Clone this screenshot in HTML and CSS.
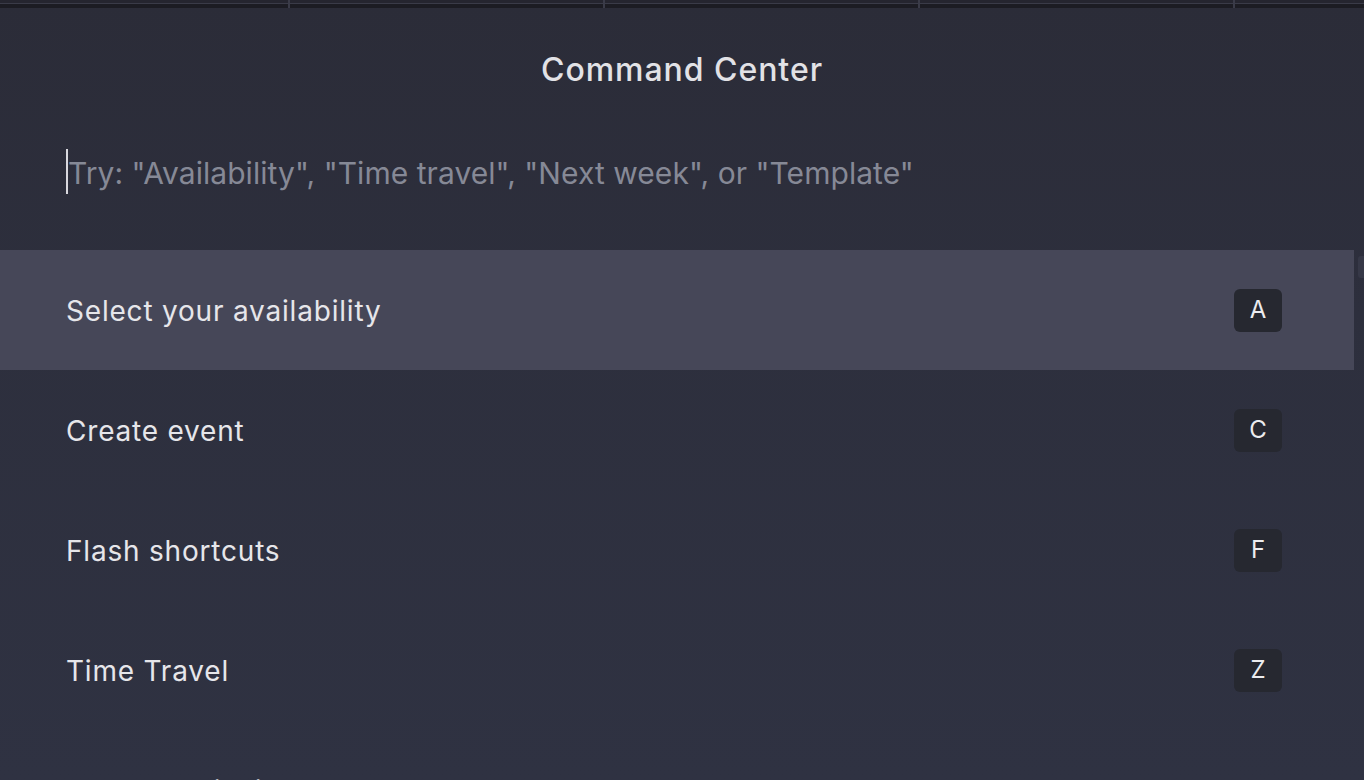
FILE: index.html
```html
<!DOCTYPE html>
<html lang="en">
<head>
<meta charset="utf-8">
<title>Command Center</title>
<link rel="stylesheet" href="styles.css">
</head>
<body>
<div class="topbar">
  <div class="tcell first"></div>
  <div class="tcell"></div>
  <div class="tcell"></div>
  <div class="tcell"></div>
  <div class="tcell last"></div>
</div>
<main class="panel">
  <h1 class="title">Command Center</h1>
  <div class="search">
    <span class="caret"></span>
    <span class="placeholder">Try: "Availability", "Time travel", "Next week", or "Template"</span>
  </div>
  <div class="list-wrap">
    <ul class="list">
      <li class="item active"><span class="label">Select your availability</span><kbd class="key">A</kbd></li>
      <li class="item"><span class="label">Create event</span><kbd class="key">C</kbd></li>
      <li class="item"><span class="label">Flash shortcuts</span><kbd class="key">F</kbd></li>
      <li class="item"><span class="label">Time Travel</span><kbd class="key">Z</kbd></li>
      <li class="item"><span class="label">Accept all invites</span></li>
    </ul>
    <div class="thumb"></div>
  </div>
</main>
</body>
</html>
```

FILE: styles.css
```css
* { box-sizing: border-box; }
html, body {
  margin: 0;
  padding: 0;
  width: 1364px;
  height: 780px;
  overflow: hidden;
}
body {
  font-family: Inter, "Noto Sans", "Liberation Sans", sans-serif;
  background: linear-gradient(180deg, #2b2c38 0%, #2d2f3d 40%, #2f3242 100%);
  color: #e4e4e8;
}
.topbar {
  display: flex;
  height: 8px;
}
.tcell {
  height: 8px;
  width: 315px;
  background: linear-gradient(180deg, #25252f 0, #25252f 3px, #3a3b48 3px, #3a3b48 4px, #1c1c23 4px, #1c1c23 8px);
  border-left: 2px solid #3a3b48;
}
.tcell.first { width: 288px; border-left: none; }
.tcell.last { flex: 1; }

.panel {
  display: flex;
  flex-direction: column;
}
.title {
  margin: 0;
  padding-top: 42px;
  height: 90px;
  line-height: 40px;
  text-align: center;
  font-size: 32px;
  font-weight: 500;
  letter-spacing: 0.95px;
  color: #e2e2e6;
}
.search {
  display: flex;
  align-items: center;
  margin-top: 50px;
  height: 46px;
  padding-left: 66px;
  margin-bottom: 56px;
}
.caret {
  display: block;
  width: 2px;
  height: 45px;
  background: #d8d8de;
}
.placeholder {
  font-size: 30px;
  line-height: 46px;
  padding-top: 4px;
  color: #868996;
  letter-spacing: 0.05px;
}
.list-wrap {
  display: flex;
  position: relative;
}
.list {
  list-style: none;
  margin: 0;
  padding: 0;
  width: 1354px;
}
.item {
  display: flex;
  align-items: center;
  justify-content: space-between;
  height: 120px;
  padding: 0 72px 0 66px;
}
.item.active {
  background: #464758;
}
.label {
  font-size: 28px;
  letter-spacing: 0.8px;
  padding-top: 2px;
  color: #e6e6ea;
}
.key {
  display: flex;
  align-items: center;
  justify-content: center;
  width: 48px;
  height: 43px;
  padding-bottom: 2px;
  border-radius: 6px;
  background: #262830;
  color: #ececef;
  font-family: Inter, "Liberation Sans", sans-serif;
  font-size: 24px;
}
.thumb {
  position: absolute;
  left: 1358px;
  top: 6px;
  width: 6px;
  height: 22px;
  border-radius: 3px 0 0 3px;
  background: #363847;
}
```
